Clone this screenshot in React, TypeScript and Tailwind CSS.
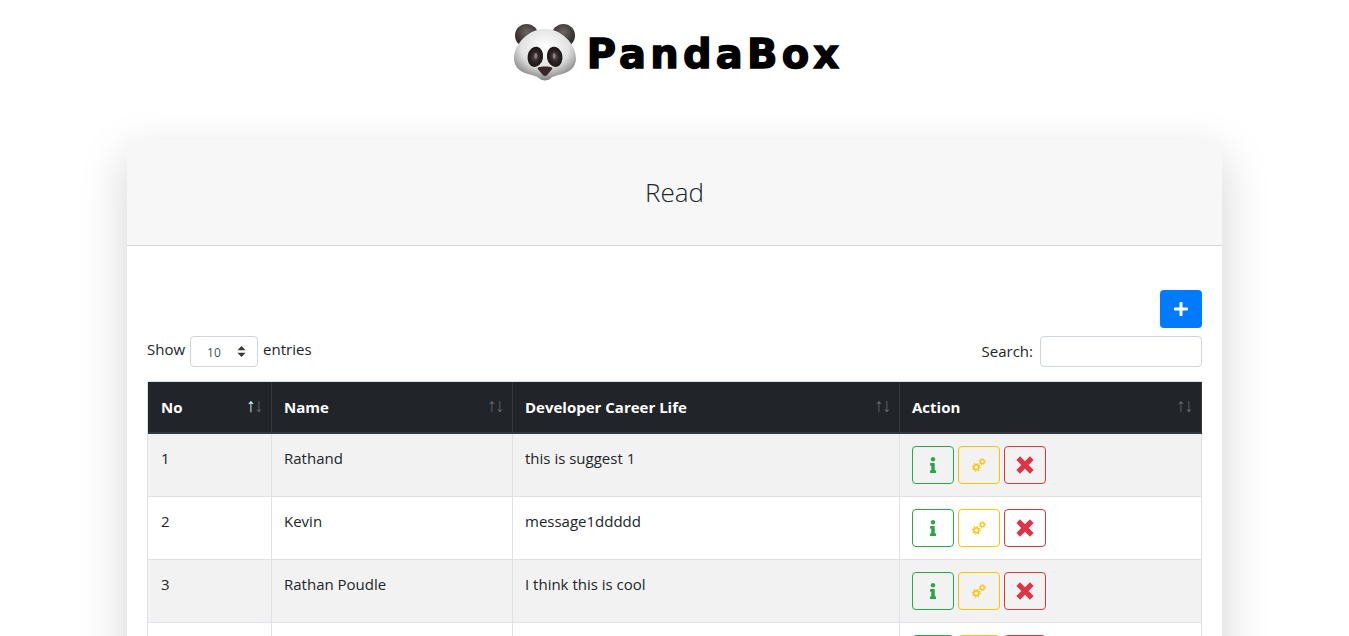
import React from "react";
import { FaInfo, FaPlus } from "react-icons/fa";

const font = { fontFamily: '"Open Sans", "Noto Sans", sans-serif' };

function Panda() {
  return (
    <svg width="64" height="60" viewBox="0 0 66 62" className="shrink-0">
      <defs>
        <radialGradient id="face" cx="50%" cy="35%" r="65%">
          <stop offset="0%" stopColor="#ffffff" />
          <stop offset="60%" stopColor="#e2e2e2" />
          <stop offset="100%" stopColor="#808080" />
        </radialGradient>
        <radialGradient id="ear" cx="50%" cy="35%" r="60%">
          <stop offset="0%" stopColor="#6b6563" />
          <stop offset="100%" stopColor="#2a2626" />
        </radialGradient>
        <radialGradient id="eye" cx="50%" cy="50%" r="55%">
          <stop offset="0%" stopColor="#5b5352" />
          <stop offset="50%" stopColor="#2c2324" />
          <stop offset="100%" stopColor="#171213" />
        </radialGradient>
      </defs>
      <circle cx="14" cy="14" r="12" fill="url(#ear)" />
      <circle cx="52" cy="14" r="12" fill="url(#ear)" />
      <path d="M33 7C17 7 1 22 1 38c0 9 7 14 15 16 6 1.500 11 3 12 5 2 2 8 2 10 0 1-2 6-3.500 12-5 8-2 15-7 15-16C65 22 49 7 33 7Z" fill="url(#face)" />
      <ellipse cx="23" cy="36" rx="8" ry="10.500" fill="url(#eye)" transform="rotate(10 23 36)" />
      <ellipse cx="43" cy="36" rx="8" ry="10.500" fill="url(#eye)" transform="rotate(-10 43 36)" />
      <ellipse cx="23.500" cy="35" rx="1.500" ry="3" fill="#8a8382" />
      <ellipse cx="42.500" cy="35" rx="1.500" ry="3" fill="#8a8382" />
      <path d="M26 47c3-1.500 11-1.500 14 0 1 .6.5 1.500 0 2l-5 6c-1 1-3 1-4 0l-5-6c-.5-.5-1-1.400 0-2Z" fill="#3a2528" />
    </svg>
  );
}

function Gears() {
  return (
    <svg width="16" height="16" viewBox="0 0 16 16" fill="none" stroke="currentColor">
      <circle cx="5.300" cy="10.300" r="2.500" strokeWidth="1.500" />
      <circle cx="5.300" cy="10.300" r="3.800" strokeWidth="1.200" strokeDasharray="1.300 1.685" />
      <circle cx="11.300" cy="4.700" r="2" strokeWidth="1.200" />
      <circle cx="11.300" cy="4.700" r="3.100" strokeWidth="1" strokeDasharray="1.100 1.335" />
    </svg>
  );
}

function Cross() {
  return (
    <svg width="18" height="18" viewBox="0 0 18 18" stroke="currentColor" strokeWidth="5.200" strokeLinecap="butt">
      <path d="M2.200 2.200 15.800 15.800M15.800 2.200 2.200 15.800" />
    </svg>
  );
}

function SortArrows({ active }: { active?: boolean }) {
  return (
    <span className="flex shrink-0 text-[19px] leading-[16px] font-normal -mt-[3px]" style={{ fontFamily: '"Liberation Sans", sans-serif' }}>
      <span className={active ? "text-[#d5f3ff] w-[8px] flex justify-center" : "text-[#62676b] w-[8px] flex justify-center"}>↑</span>
      <span className="text-[#62676b] w-[8px] flex justify-center">↓</span>
    </span>
  );
}

function Th({ label, active, w }: { label: string; active?: boolean; w: string }) {
  return (
    <th className={`${w} h-[52px] p-0 border-r border-b-2 border-[#32383e] text-left bg-[#212529]`}>
      <div className="flex items-center justify-between pl-[12px] pr-[8px]">
        <span className="font-bold text-[15px] text-white">{label}</span>
        <SortArrows active={active} />
      </div>
    </th>
  );
}

function Actions() {
  const base = "w-[42px] h-[38px] rounded-[4px] border flex items-center justify-center bg-transparent";
  return (
    <div className="flex gap-[4px]">
      <button className={`${base} border-[#28a745] text-[#28a745]`}><FaInfo size={16} /></button>
      <button className={`${base} border-[#ffc107] text-[#ffc107]`}><Gears /></button>
      <button className={`${base} border-[#dc3545] text-[#dc3545]`}><Cross /></button>
    </div>
  );
}

function Row({ no, name, msg, odd }: { no?: string; name?: string; msg?: string; odd?: boolean }) {
  const td = "px-[12px] pt-[12px] pb-[12px] align-top border-r border-b border-[#dee2e6] text-[15px] leading-[24px] text-[#212529]";
  return (
    <tr className={odd ? "bg-[#f2f2f2] h-[63px]" : "bg-white h-[63px]"}>
      <td className={td}>{no}</td>
      <td className={td}>{name}</td>
      <td className={td}>{msg}</td>
      <td className={td}><Actions /></td>
    </tr>
  );
}

export default function App() {
  return (
    <div className="h-[636px] overflow-hidden bg-white" style={font}>
      <header className="flex items-center justify-center h-[104px] pl-[7px]">
        <Panda />
        <span
          className="ml-[10px] mt-[3px] text-[40px] leading-none font-bold text-black tracking-[4.2px] [-webkit-text-stroke:1.4px_#000]"
          style={{ fontFamily: '"DejaVu Sans", sans-serif' }}
        >
          PandaBox
        </span>
      </header>
      <main className="w-[1095px] mx-auto mt-[36px] bg-white rounded-[4px] shadow-[0_16px_48px_rgba(0,0,0,0.175)]">
        <div className="h-[106px] bg-[#f7f7f7] border-b border-[#d6d6d6] rounded-t-[4px] flex items-center justify-center">
          <h1 className="text-[26px] font-light text-[#212529]">Read</h1>
        </div>
        <div className="px-[20px] pt-[44px]">
          <div className="flex justify-end">
            <button className="w-[42px] h-[38px] rounded-[4px] bg-[#007bff] text-white flex items-center justify-center">
              <FaPlus size={16} />
            </button>
          </div>
          <div className="flex items-start justify-between mt-[8px] text-[15px] text-[#212529]">
            <div className="flex items-center h-[31px]">
              <span className="mr-[5px] -mt-[5px]">Show</span>
              <div className="w-[68px] h-[31px] rounded-[4px] border border-[#ced4da] flex items-center justify-between pl-[16px] pr-[11px]">
                <span className="text-[12px] text-[#495057] pt-[3px]">10</span>
                <svg width="9" height="13" viewBox="0 0 9 13">
                  <path d="M4.500 1 8.500 5.200H.5ZM4.500 12 .5 7.800H8.500Z" fill="#343a40" />
                </svg>
              </div>
              <span className="ml-[5px] -mt-[5px]">entries</span>
            </div>
            <div className="flex items-center h-[31px]">
              <span className="mr-[7px] -mt-[1px]">Search:</span>
              <input className="w-[162px] h-[31px] rounded-[4px] border border-[#ced4da] bg-white" />
            </div>
          </div>
          <table className="mt-[14px] w-[1055px] table-fixed border-separate border-spacing-0 border-l border-t border-[#dee2e6]">
            <thead>
              <tr>
                <Th label="No" active w="w-[124px] [&>div]:pl-[13px]" />
                <Th label="Name" w="w-[241px]" />
                <Th label="Developer Career Life" w="w-[387px]" />
                <Th label="Action" w="w-[302px]" />
              </tr>
            </thead>
            <tbody className="[&_td:first-child]:pl-[13px]">
              <Row no="1" name="Rathand" msg="this is suggest 1" odd />
              <Row no="2" name="Kevin" msg="message1ddddd" />
              <Row no="3" name="Rathan Poudle" msg="I think this is cool" odd />
              <Row />
            </tbody>
          </table>
        </div>
      </main>
    </div>
  );
}
